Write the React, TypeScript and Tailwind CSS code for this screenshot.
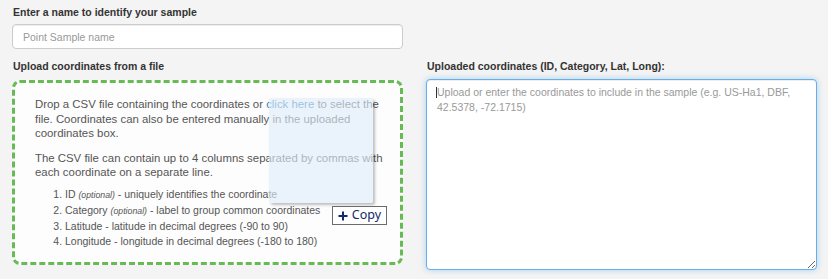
import React from 'react';

const font = { fontFamily: '"Liberation Sans", Arial, Helvetica, sans-serif' };

const App: React.FC = () => {
  return (
    <div className="w-[828px] h-[279px] bg-[#f4f4f4] px-3 pt-[5px] text-[#333]" style={font}>
      {/* 샘플 이름 */}
      <label className="block text-[10.5px] leading-[15px] font-bold pl-[1px]">
        Enter a name to identify your sample
      </label>
      <input
        type="text"
        placeholder="Point Sample name"
        className="mt-[4px] block w-[391px] h-[25px] px-[10px] text-[10.5px] bg-white border border-[#ccc] rounded-[4px] shadow-[inset_0_1px_1px_rgba(0,0,0,0.075)] outline-none placeholder:text-[#999]"
      />

      <div className="grid grid-cols-[391px_391px] gap-[23px] mt-[10px]">
        {/* 파일에서 좌표 업로드 */}
        <div>
          <label className="block text-[10.5px] leading-[15px] font-bold pl-[1px]">
            Upload coordinates from a file
          </label>
          <div className="relative mt-[6px] h-[185px] border-[3px] border-dashed border-[#66bb55] rounded-[8px] bg-[#fdfdfd] pt-[14px] pl-[20px] pr-[10px] text-[#555]">
            <p className="text-[11.4px] leading-[14.6px] pr-[8px]">
              Drop a CSV file containing the coordinates or{' '}
              <a className="text-[#337ab7] cursor-pointer">click here</a> to select the file.
              Coordinates can also be entered manually in the uploaded coordinates box.
            </p>
            <p className="mt-[10px] text-[11.4px] leading-[14.6px]">
              The CSV file can contain up to 4 columns separated by commas with each coordinate
              on a separate line.
            </p>
            <ol className="mt-[7px] list-decimal pl-[30px] text-[10.5px] leading-[15px]">
              <li>
                ID <i className="text-[8.75px]">(optional)</i> - uniquely identifies the coordinate
              </li>
              <li>
                Category <i className="text-[8.75px]">(optional)</i> - label to group common
                coordinates
              </li>
              <li>Latitude - latitude in decimal degrees (-90 to 90)</li>
              <li>Longitude - longitude in decimal degrees (-180 to 180)</li>
            </ol>

            {/* 드래그 중인 파일 미리보기 */}
            <div className="absolute left-[254px] top-[15px] w-[104px] h-[105px] bg-[rgba(222,238,250,0.62)] rounded-[2px] shadow-[2px_2px_3px_rgba(0,0,0,0.25)]" />
            <div
              className="absolute left-[317px] top-[123px] w-[55px] h-[19px] flex items-center justify-center gap-[4px] bg-white border border-[#6b6b6b] text-[#14286e] text-[12.5px] leading-none"
              style={{ fontFamily: '"Noto Sans", "Open Sans", sans-serif' }}
            >
              <svg width="10" height="10" viewBox="0 0 10 10">
                <path d="M5 0.5v9M0.5 5h9" stroke="#14286e" strokeWidth="2" />
              </svg>
              <span>Copy</span>
            </div>
          </div>
        </div>

        {/* 업로드된 좌표 */}
        <div>
          <label className="block text-[10.5px] leading-[15px] font-bold pl-[1px]">
            Uploaded coordinates (ID, Category, Lat, Long):
          </label>
          <div className="relative mt-[5px]">
            <textarea
              placeholder="Upload or enter the coordinates to include in the sample (e.g. US-Ha1, DBF, 42.5378, -72.1715)"
              className="block w-[391px] h-[191px] pt-[5px] px-[10px] text-[10.5px] leading-[15px] bg-white border border-[#66afe9] rounded-[4px] outline-none shadow-[inset_0_1px_1px_rgba(0,0,0,0.075),0_0_6px_rgba(102,175,233,0.5)] placeholder:text-[#999]"
              style={font}
            />
            <span className="absolute left-[10px] top-[8px] w-[1px] h-[11px] bg-[#333]" />
          </div>
        </div>
      </div>
    </div>
  );
};

export default App;
